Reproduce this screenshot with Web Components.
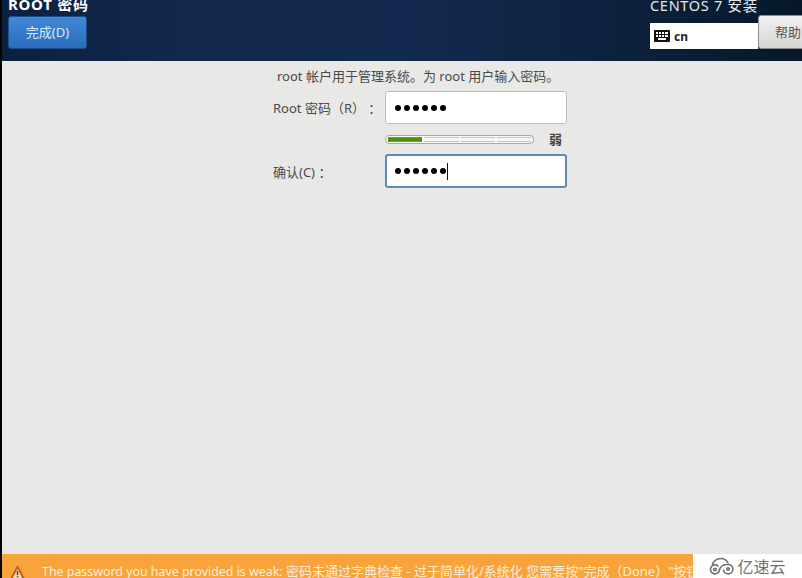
<!DOCTYPE html>
<html lang="zh">
<head>
<meta charset="utf-8">
<title>ROOT 密码</title>
<style>
html, body { margin: 0; height: 100%; overflow: hidden; background: #000; }
body { font-family: "Liberation Sans", "Noto Sans CJK SC", sans-serif; }
</style>
</head>
<body>
<install-app>
  <install-header slot="top" title-text="ROOT 密码" done="完成(D)" product="CENTOS 7 安装" layout-name="cn" help="帮助"></install-header>
  <password-form></password-form>
  <warn-bar slot="bottom"><span class="en">The password you have provided is weak:</span> 密码未通过字典检查 - 过于简单化/系统化 您需要按"完成（Done）"按钮</warn-bar>
</install-app>
<script>
const fontStack = '"Noto Sans", "Noto Sans CJK SC", sans-serif';

class InstallApp extends HTMLElement {
  constructor() {
    super();
    this.attachShadow({ mode: 'open' });
    this.shadowRoot.innerHTML = `
      <style>
        :host { display: flex; flex-direction: column; width: 802px; height: 578px; overflow: hidden; background: #000; text-spacing-trim: space-all; }
        .mid { flex: 1; min-height: 0; margin-left: 2px; background: #e8e8e7; display: flex; }
      </style>
      <slot name="top"></slot>
      <div class="mid"><slot></slot></div>
      <slot name="bottom"></slot>`;
  }
}

class InstallHeader extends HTMLElement {
  constructor() {
    super();
    this.attachShadow({ mode: 'open' });
    this.shadowRoot.innerHTML = `
      <style>
        :host {
          display: flex; justify-content: space-between; height: 61px; flex: none; overflow: hidden;
          margin-left: 2px; box-sizing: border-box; padding-left: 6px;
          font-family: ${fontStack}; color: #fff;
          background: linear-gradient(90deg, #0c2140 0%, #12294d 25%, #122a4f 50%, #0d2340 72%, #06182a 100%);
        }
        .left { display: flex; flex-direction: column; align-items: flex-start; }
        h1 { margin: -5px 0 0; font-size: 15px; line-height: 19px; font-weight: 700; letter-spacing: .7px; }
        button {
          margin-top: 2px; width: 79px; height: 33px; padding: 0; box-sizing: border-box;
          border: 1px solid #1d4f8a; border-radius: 3px; color: #dce9f8;
          background: linear-gradient(#4189d6, #2a6cbd);
          font: 13px/1 ${fontStack};
        }
        .right { width: 152px; display: flex; flex-direction: column; }
        .product { margin: -5px 0 0; font-size: 14.5px; line-height: 20px; letter-spacing: .7px; color: #e4e8ee; white-space: nowrap; }
        .row { display: flex; align-items: flex-start; }
        .kb { width: 108px; height: 26px; margin-top: 8px; background: #fff; color: #222; display: flex; align-items: center; gap: 4px; padding-left: 4px; box-sizing: border-box; font-size: 12px; font-weight: 700; }
        .help {
          width: 44px; height: 34px; flex: none; border: 1px solid #8b8d8f; border-right: 0; border-radius: 3px 0 0 3px;
          box-sizing: border-box; line-height: 32px; overflow: hidden; white-space: nowrap;
          background: linear-gradient(#f1f1f0, #d5d5d3); color: #555; font-size: 13px; text-align: left; padding-left: 16px;
        }
      </style>
      <div class="left">
        <h1>${this.getAttribute('title-text')}</h1>
        <button>${this.getAttribute('done')}</button>
      </div>
      <div class="right">
        <p class="product">${this.getAttribute('product')}</p>
        <div class="row">
          <div class="kb">
            <svg width="16" height="12" viewBox="0 0 16 12"><rect width="16" height="12" rx="1" fill="#111"/><g fill="#fff"><rect x="2" y="2" width="2" height="2"/><rect x="5" y="2" width="2" height="2"/><rect x="8" y="2" width="2" height="2"/><rect x="11" y="2" width="3" height="2"/><rect x="2" y="5" width="2" height="2"/><rect x="5" y="5" width="2" height="2"/><rect x="8" y="5" width="2" height="2"/><rect x="11" y="5" width="3" height="2"/><rect x="4" y="8" width="8" height="2"/></g></svg>
            <span>${this.getAttribute('layout-name')}</span>
          </div>
          <div class="help">${this.getAttribute('help')}</div>
        </div>
      </div>`;
  }
}

class PasswordField extends HTMLElement {
  constructor() {
    super();
    this.attachShadow({ mode: 'open' });
    const focused = this.hasAttribute('focused');
    this.shadowRoot.innerHTML = `
      <style>
        :host { display: contents; font-family: ${fontStack}; }
        label { font-size: 13px; color: #4a4a4a; white-space: pre; align-self: center; }
        .box {
          height: ${focused ? 34 : 33}px; box-sizing: border-box; background: #fff; border-radius: 3px;
          border: ${focused ? '2px solid #5f8bb8' : '1px solid #bdbdbb'};
          display: flex; align-items: center; padding-left: ${focused ? 8 : 9}px;
        }
        .dots { display: flex; gap: 3px; }
        i { width: 6px; height: 6px; border-radius: 50%; background: #000; }
        .caret { width: 1px; height: 17px; background: #111; margin-left: 1px; }
      </style>
      <label><slot></slot></label>
      <div class="box">
        <span class="dots"><i></i><i></i><i></i><i></i><i></i><i></i></span>
        ${focused ? '<span class="caret"></span>' : ''}
      </div>`;
  }
}

class StrengthMeter extends HTMLElement {
  constructor() {
    super();
    this.attachShadow({ mode: 'open' });
    this.shadowRoot.innerHTML = `
      <style>
        :host { display: flex; align-items: center; justify-content: space-between; grid-column: 2; font-family: ${fontStack}; height: 14px; }
        .track { width: 149px; height: 9px; box-sizing: border-box; border: 1px solid #a8a8a6; border-radius: 4px; background: #f7f7f6; display: flex; gap: 2px; padding: 1px 2px; }
        .seg { flex: 1; border-top: 1px solid #c4c4c2; border-bottom: 1px solid #c4c4c2; }
        .seg.on { background: #4f8f0e; border-color: #6aa31f; }
        span { font-size: 13px; color: #444; font-weight: 700; margin-right: 5px; line-height: 14px; }
      </style>
      <div class="track"><div class="seg on"></div><div class="seg"></div><div class="seg"></div><div class="seg"></div></div>
      <span><slot></slot></span>`;
  }
}

class PasswordForm extends HTMLElement {
  constructor() {
    super();
    this.attachShadow({ mode: 'open' });
    this.shadowRoot.innerHTML = `
      <style>
        :host { display: block; flex: 1; font-family: ${fontStack}; padding: 7px 0 0 271px; }
        p { margin: 0 0 0 4px; font-size: 13px; line-height: 17px; color: #4a4a4a; white-space: pre; }
        .grid { display: grid; grid-template-columns: 112px 182px; margin-top: 6px; row-gap: 8px; }
      </style>
      <p>root 帐户用于管理系统。为 root 用户输入密码。</p>
      <div class="grid">
        <password-field>Root 密码（R） ：</password-field>
        <strength-meter>弱</strength-meter>
        <password-field focused>确认(C) ：</password-field>
      </div>`;
  }
}

class WarnBar extends HTMLElement {
  constructor() {
    super();
    this.attachShadow({ mode: 'open' });
    this.shadowRoot.innerHTML = `
      <style>
        :host { display: flex; height: 24px; flex: none; margin-left: 2px; font-family: ${fontStack}; background: #e8e8e7; }
        .bar { width: 691px; overflow: hidden; background: #f8a43b; color: #fdeedb; display: flex; align-items: flex-start; font-size: 13px; line-height: 18px; white-space: nowrap; padding-top: 8px; box-sizing: border-box; }
        ::slotted(.en) { font-size: 12.4px; }
        .warn { flex: none; margin: 3px 17px 0 8px; }
        .mark { width: 109px; background: #fff; display: flex; align-items: center; justify-content: center; gap: 2px; color: #707070; font-size: 16px; }
      </style>
      <div class="bar">
        <svg class="warn" width="15" height="15" viewBox="0 0 15 15"><path d="M7.5 1 14.5 14H.5Z" fill="#c96f22" stroke="#a85a1a" stroke-linejoin="round"/><path d="M7.5 4 12 13H3Z" fill="#f8dcb0"/><rect x="6.800" y="6" width="1.400" height="4" fill="#5a3a18"/><rect x="6.800" y="10.800" width="1.400" height="1.400" fill="#5a3a18"/></svg>
        <span><slot></slot></span>
      </div>
      <div class="mark">
        <svg width="26" height="18" viewBox="0 0 26 18" fill="none" stroke="#6f6f6f" stroke-width="1.600" stroke-linecap="round"><path d="M3.500 8.500C3.500 4.500 7.500 1.500 12 1.500c3 0 5.500 1.600 7 4.500"/><path d="M9 9a4.500 4.500 0 1 0 1.500 3.500"/><path d="M10.500 12.500C11.500 9 14.500 7.500 19 7.500a4.700 4.700 0 1 1-4.500 5.500"/><circle cx="19" cy="12" r="1.300"/><circle cx="6" cy="12.500" r="1.300"/></svg>
        <span>亿速云</span>
      </div>`;
  }
}

customElements.define('install-app', InstallApp);
customElements.define('install-header', InstallHeader);
customElements.define('password-field', PasswordField);
customElements.define('strength-meter', StrengthMeter);
customElements.define('password-form', PasswordForm);
customElements.define('warn-bar', WarnBar);
</script>
</body>
</html>
